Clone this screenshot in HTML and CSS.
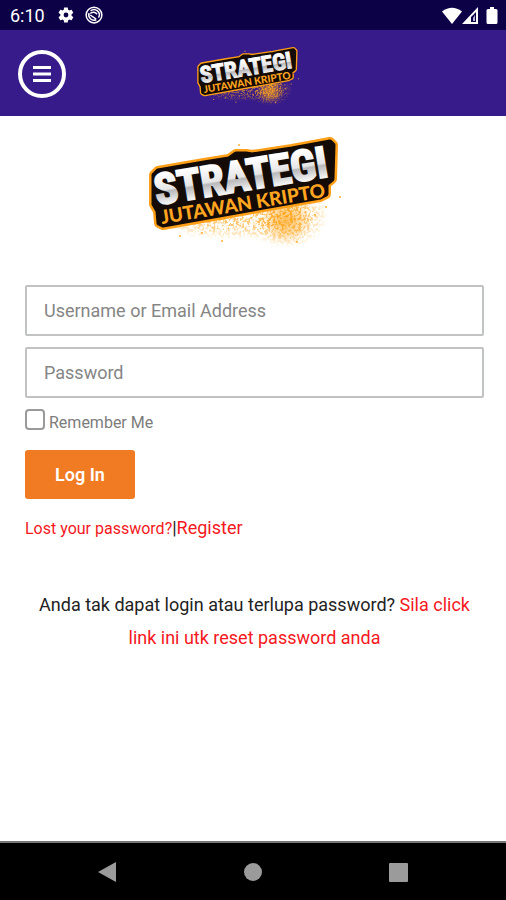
FILE: index.html
```html
<!DOCTYPE html>
<html lang="ms">
<head>
<meta charset="utf-8">
<meta name="viewport" content="width=device-width, initial-scale=1">
<title>Strategi Jutawan Kripto</title>
<link rel="stylesheet" href="styles.css">
</head>
<body>
<svg class="defs" width="0" height="0" aria-hidden="true">
  <defs>
    <linearGradient id="metal" x1="0" y1="0" x2="0" y2="1">
      <stop offset="0.2" stop-color="#fff"/>
      <stop offset="0.52" stop-color="#e6e6e6"/>
      <stop offset="0.56" stop-color="#b9b9bc"/>
      <stop offset="0.8" stop-color="#f4f4f4"/>
    </linearGradient>
    <radialGradient id="dust">
      <stop offset="0" stop-color="#ffa41a"/>
      <stop offset="0.5" stop-color="#ffa41a" stop-opacity="0.6"/>
      <stop offset="1" stop-color="#ffa41a" stop-opacity="0"/>
    </radialGradient>
    <filter id="grain" x="0" y="0" width="1" height="1">
      <feTurbulence type="fractalNoise" baseFrequency="0.35" numOctaves="2" seed="4"/>
      <feColorMatrix values="0 0 0 0 1  0 0 0 0 1  0 0 0 0 1  6 0 0 0 -2.7"/>
      <feComposite in="SourceGraphic" operator="in"/>
    </filter>
    <symbol id="logo" viewBox="9 0 220 130">
      <ellipse cx="150" cy="96" rx="26" ry="24" fill="url(#dust)" opacity="0.7"/>
      <g filter="url(#grain)">
        <ellipse cx="150" cy="92" rx="42" ry="32" fill="url(#dust)"/>
        <ellipse cx="95" cy="98" rx="75" ry="18" fill="url(#dust)" opacity="0.7"/>
      </g>
      <g fill="#ffb02e">
        <circle cx="103" cy="21" r="1"/><circle cx="86" cy="117" r="1"/><circle cx="44" cy="112" r="1"/>
        <circle cx="204" cy="73" r="1"/><circle cx="190" cy="83" r="1"/><circle cx="179" cy="91" r="1"/>
        <circle cx="161" cy="118" r="1"/><circle cx="66" cy="109" r="1"/>
      </g>
      <path d="M22 47 68 39 93 35 100 30 110 30 116 31 156 25 194 18 197 21 196 55 190 60 190 70 184 73 27 101 23 99 22 87 18 80 18 51Z" fill="#ff9f17" stroke="#ff9f17" stroke-width="10" stroke-linejoin="round"/>
      <path d="M22 47 68 39 93 35 100 30 110 30 116 31 156 25 194 18 197 21 196 55 190 60 190 70 184 73 27 101 23 99 22 87 18 80 18 51Z" fill="#140b07" stroke="#140b07" stroke-width="5" stroke-linejoin="round"/>
      <text class="logo-title" x="21" y="81" transform="rotate(-9.400 21 81)">STRATEGI</text>
      <text class="logo-subtitle" x="26" y="100" transform="rotate(-9.400 26 100)">JUTAWAN KRIPTO</text>
    </symbol>
  </defs>
</svg>

<div class="status">
  <time class="clock">6:10</time>
  <svg class="status-icon" viewBox="0 0 24 24" aria-hidden="true"><path fill="#fff" fill-rule="evenodd" d="M19.4 13a7.5 7.5 0 0 0 0-2l2.1-1.6c.2-.2.3-.4.1-.7l-2-3.4c-.1-.2-.4-.3-.6-.2l-2.5 1a7.300 7.300 0 0 0-1.700-1L14.400 2.400c0-.2-.2-.4-.5-.4h-4c-.2 0-.4.2-.5.4L9 5.100a7.300 7.300 0 0 0-1.700 1l-2.500-1c-.2-.1-.5 0-.6.200l-2 3.400c-.1.200-.1.500.1.700L4.500 11a7.500 7.500 0 0 0 0 2l-2.200 1.600c-.2.200-.2.400-.1.700l2 3.400c.1.200.4.300.6.200l2.500-1a7.300 7.300 0 0 0 1.700 1l.4 2.700c.1.200.3.400.5.400h4c.3 0 .5-.2.5-.4l.4-2.700a7.300 7.300 0 0 0 1.700-1l2.500 1c.2.100.5 0 .6-.2l2-3.400c.2-.3.100-.5-.1-.7ZM12 15.200a3.200 3.200 0 1 1 0-6.400 3.200 3.200 0 0 1 0 6.400Z"/></svg>
  <svg class="status-icon" viewBox="0 0 24 24" fill="none" stroke="#fff" aria-hidden="true"><circle cx="12" cy="12" r="10.500" stroke-width="2"/><path d="M7.500 6.500A7 7 0 0 1 18 15.500M5.500 9.500A7 7 0 0 0 15 18.300" stroke-width="2"/><path d="M7 10c3-3 7-2 9 1M7 12l8 5.500" stroke-width="2"/></svg>
  <div class="signals">
    <svg width="20" height="17" viewBox="0 0 20 17" aria-hidden="true"><path fill="#fff" d="M10 17 0 4.500Q10-3 20 4.500Z"/></svg>
    <svg width="16" height="17" viewBox="0 0 16 17" aria-hidden="true"><path fill="#fff" fill-rule="evenodd" d="M16 0V17H0ZM14 5V15H9V10Z"/><path d="M11 11V14H13V8Z" fill="#b9b3d6"/></svg>
    <svg class="battery" width="12" height="17" viewBox="0 0 12 17" aria-hidden="true"><path fill="#fff" d="M4 0h4v2h2q1.500 0 1.500 1.500v12Q11.500 17 10 17H2Q.5 17 .5 15.500v-12Q.5 2 2 2h2Z"/></svg>
  </div>
</div>

<header class="header">
  <button class="menu" type="button" aria-label="Menu">
    <svg width="18" height="16" viewBox="0 0 18 16" aria-hidden="true"><path d="M0 1.500H18M0 8H18M0 14.500H18" stroke="#fff" stroke-width="3"/></svg>
  </button>
  <svg class="header-logo" role="img" aria-label="Strategi Jutawan Kripto"><use href="#logo"/></svg>
</header>

<main class="main">
  <svg class="main-logo" role="img" aria-label="Strategi Jutawan Kripto"><use href="#logo"/></svg>
  <form class="form">
    <input class="field" type="text" placeholder="Username or Email Address" aria-label="Username or Email Address">
    <input class="field" type="password" placeholder="Password" aria-label="Password">
    <div class="remember">
      <input class="check" type="checkbox" id="remember">
      <label for="remember">Remember Me</label>
    </div>
    <button class="submit" type="submit">Log In</button>
    <div class="links"><a class="lost" href="#">Lost your password?</a>|<a href="#">Register</a></div>
  </form>
  <p class="help">Anda tak dapat login atau terlupa password? <a href="#">Sila click link ini utk reset password anda</a></p>
</main>

<nav class="navbar" aria-label="System">
  <button type="button" aria-label="Back"><svg viewBox="0 0 20 22"><path d="M1 11 19 1V21Z"/></svg></button>
  <button type="button" aria-label="Home"><svg viewBox="0 0 20 22"><circle cx="10" cy="11" r="9"/></svg></button>
  <button type="button" aria-label="Recent apps"><svg viewBox="0 0 20 22"><rect x="0" y="2" width="19" height="19" rx="1"/></svg></button>
</nav>
</body>
</html>
```
FILE: styles.css
```css
* {
  box-sizing: border-box;
}

body {
  margin: 0;
  min-height: 100vh;
  display: flex;
  flex-direction: column;
  background: #fff;
  color: #222;
  font-family: Roboto, "Liberation Sans", sans-serif;
  font-size: 18px;
}

button {
  font: inherit;
  border: 0;
  padding: 0;
}

a {
  color: #f5181d;
  text-decoration: none;
}

.defs {
  position: absolute;
}

.logo-title {
  font: bold 43px "Liberation Sans Narrow", "Roboto Condensed", Roboto, sans-serif;
  fill: url(#metal);
  stroke: url(#metal);
  stroke-width: 2px;
}

.logo-subtitle {
  font: 900 19px Lato, sans-serif;
  fill: #ffa51f;
}

.status {
  height: 30px;
  padding: 0 8px 0 10px;
  display: flex;
  align-items: center;
  gap: 10px;
  background: #0c0047;
  color: #fff;
}

.clock {
  margin-right: 2px;
}

.status-icon {
  width: 18px;
  height: 18px;
}

.signals {
  margin-left: auto;
  display: flex;
}

.battery {
  margin-left: 8px;
}

.header {
  height: 86px;
  padding: 2px 18px 0;
  display: grid;
  grid-template-columns: 1fr auto 1fr;
  align-items: center;
  background: #371b8b;
}

.menu {
  width: 48px;
  height: 48px;
  display: grid;
  place-items: center;
  border: 4px solid #fff;
  border-radius: 50%;
  background: none;
}

.header-logo {
  width: 117px;
  height: 69px;
}

.main {
  flex: 1;
  padding: 8px 22px 0 25px;
  display: flex;
  flex-direction: column;
}

.main-logo {
  width: 220px;
  height: 130px;
  align-self: center;
}

.form {
  margin-top: 31px;
  display: flex;
  flex-direction: column;
  align-items: flex-start;
}

.field {
  width: 100%;
  height: 51px;
  margin-bottom: 11px;
  padding: 0 17px;
  border: 2px solid #c1c3c3;
  border-radius: 2px;
  background: #fff;
  font: inherit;
}

.field::placeholder {
  color: #858585;
  opacity: 1;
}

.remember {
  display: flex;
  align-items: flex-end;
  gap: 4px;
  color: #7c7c7c;
  font-size: 16px;
  line-height: 14px;
}

.check {
  appearance: none;
  width: 20px;
  height: 21px;
  margin: 0;
  border: 2px solid #9a9a9a;
  border-radius: 4px;
}

.submit {
  margin-top: 20px;
  padding: 0 30px;
  height: 49px;
  border-radius: 3px;
  background: #f07b22;
  color: #fff;
  font-weight: 600;
}

.links {
  margin-top: 17px;
  line-height: 24px;
}

.lost {
  font-size: 16px;
}

.help {
  margin: 47px 0 0;
  line-height: 33px;
  text-align: center;
}

.navbar {
  height: 59px;
  padding: 0 34px;
  display: flex;
  justify-content: space-around;
  align-items: center;
  border-top: 2px solid #777;
  background: #000;
}

.navbar button {
  display: flex;
  background: none;
}

.navbar svg {
  width: 20px;
  height: 22px;
  fill: #9b9b9b;
}
```
